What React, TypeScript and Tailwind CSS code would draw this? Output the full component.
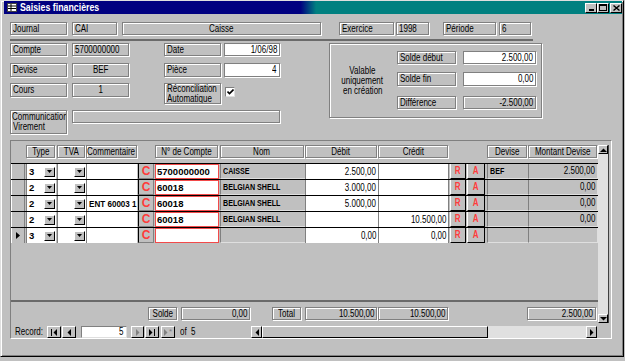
import React from "react";

const ET = "border border-[#808080] shadow-[1px_1px_0_#fff,inset_1px_1px_0_#fff]";
const RAISED = "bg-[#c0c0c0] border border-t-white border-l-white border-r-black border-b-black";

type Al = "left" | "center" | "right";

function S({ children, o = "left", k = "n" }: { children?: React.ReactNode; o?: Al; k?: "n" | "b" | "c" }) {
  const origin = o === "center" ? "origin-center" : o === "right" ? "origin-right" : "origin-left";
  const sc = k === "b" ? "scale-x-[0.75]" : k === "c" ? "scale-x-[0.85]" : "scale-x-[0.8]";
  return <span className={`inline-block whitespace-pre ${sc} ${origin}`}>{children}</span>;
}

function LBox({
  className = "",
  children,
  white = false,
  align = "left",
}: {
  className?: string;
  children?: React.ReactNode;
  white?: boolean;
  align?: Al;
}) {
  const al = align === "center" ? "justify-center" : align === "right" ? "justify-end" : "justify-start";
  return (
    <div
      className={`${ET} ${white ? "bg-white" : "bg-[#c0c0c0]"} flex items-center px-[2px] overflow-hidden whitespace-nowrap ${al} ${className}`}
    >
      {children !== undefined && <S o={align}>{children}</S>}
    </div>
  );
}

function TitleBtn({ className = "", children }: { className?: string; children: React.ReactNode }) {
  return (
    <div className={`w-[12px] h-[10px] ${RAISED} flex items-center justify-center ${className}`}>{children}</div>
  );
}

function Combo({ v }: { v: string }) {
  return (
    <div className="h-full flex items-center justify-between pl-[2px] pr-[1px]">
      <span className="font-bold text-[9.5px]">{v}</span>
      <div className={`w-[11px] h-[10px] ${RAISED} flex items-center justify-center`}>
        <svg width="5" height="3" viewBox="0 0 5 3">
          <path d="M0 0H5L2.5 3Z" fill="#000" />
        </svg>
      </div>
    </div>
  );
}

type RowT = {
  type: string;
  comment: string;
  compte: string;
  nom: string;
  debit: string;
  credit: string;
  devise: string;
  montant: string;
  cur?: boolean;
};

const rows: RowT[] = [
  { type: "3", comment: "", compte: "5700000000", nom: "CAISSE", debit: "2.500,00", credit: "", devise: "BEF", montant: "2.500,00" },
  { type: "2", comment: "", compte: "60018", nom: "BELGIAN SHELL", debit: "3.000,00", credit: "", devise: "", montant: "0,00" },
  { type: "2", comment: "ENT 60003 1", compte: "60018", nom: "BELGIAN SHELL", debit: "5.000,00", credit: "", devise: "", montant: "0,00" },
  { type: "2", comment: "", compte: "60018", nom: "BELGIAN SHELL", debit: "", credit: "10.500,00", devise: "", montant: "0,00" },
  { type: "3", comment: "", compte: "", nom: "", debit: "0,00", credit: "0,00", devise: "", montant: "", cur: true },
];

const CELL = "h-[15px] border-l border-l-[#808080] overflow-hidden whitespace-nowrap";
const BOLD = "font-bold text-[9.5px]";

function RedBtn({ className = "", ch }: { className?: string; ch: string }) {
  return (
    <div
      className={`h-[15px] bg-[#c0c0c0] border-r border-b border-r-black border-b-black border-l border-l-white flex items-center justify-center text-[#ff3b3b] font-bold text-[10px] ${className}`}
    >
      <S o="center">{ch}</S>
    </div>
  );
}

function DataRow({ r }: { r: RowT }) {
  return (
    <div className="flex h-[16px] border-t border-t-black">
      <div className="w-[14px] h-[15px] bg-[#c0c0c0] border-l border-l-white border-r border-r-[#808080] flex items-center justify-center">
        {r.cur && (
          <svg width="4" height="7" viewBox="0 0 4 7">
            <path d="M0 0L4 3.5L0 7Z" fill="#000" />
          </svg>
        )}
      </div>
      <div className={`ml-[1px] w-[30px] bg-white ${CELL}`}>
        <Combo v={r.type} />
      </div>
      <div className={`ml-[1px] w-[29px] bg-white ${CELL}`}>
        <Combo v="" />
      </div>
      <div className={`w-[51px] bg-white ${CELL} ${BOLD} flex items-center pl-[2px]`}>
        <S k="c">{r.comment}</S>
      </div>
      <div className="ml-[1px] w-[16px] h-[15px] bg-[#c0c0c0] border-l border-l-black border-r border-r-[#808080] border-b border-b-[#808080] flex items-center justify-center text-[#ff3b3b] font-bold text-[12px]">
        C
      </div>
      <div className={`ml-[1px] w-[64px] h-[15px] bg-white border border-[#f24a4a] flex items-center pl-[1px] ${BOLD} overflow-hidden whitespace-nowrap`}>
        {r.compte}
      </div>
      <div className={`ml-[1px] w-[85px] bg-[#c0c0c0] ${CELL} ${BOLD} flex items-center pl-[2px] border-b border-b-[#dfdfdf]`}>
        <S k="b">{r.nom}</S>
      </div>
      <div className={`w-[73px] bg-white ${CELL} flex items-center justify-end pr-[2px]`}>
        <S o="right">{r.debit}</S>
      </div>
      <div className={`w-[71px] bg-white ${CELL} flex items-center justify-end pr-[2px] border-r border-r-[#808080]`}>
        <S o="right">{r.credit}</S>
      </div>
      <RedBtn className="ml-[1px] w-[16px]" ch="R" />
      <RedBtn className="ml-[1px] w-[18px]" ch="A" />
      <div className={`ml-[2px] w-[41px] bg-[#c0c0c0] ${CELL} ${BOLD} flex items-center pl-[2px] border-b border-b-[#dfdfdf]`}>
        <S k="b">{r.devise}</S>
      </div>
      <div className={`w-[70px] bg-[#c0c0c0] ${CELL} flex items-center justify-end pr-[2px] border-b border-b-[#dfdfdf] border-r border-r-[#dfdfdf]`}>
        <S o="right">{r.montant}</S>
      </div>
    </div>
  );
}

function Tri({ dir, color = "#000" }: { dir: "l" | "r" | "u" | "d"; color?: string }) {
  const d =
    dir === "l" ? "M4 0V7L0.5 3.5Z" : dir === "r" ? "M0 0V7L3.5 3.5Z" : dir === "u" ? "M0 4H7L3.5 0.5Z" : "M0 0H7L3.5 3.5Z";
  const w = dir === "l" || dir === "r" ? 4 : 7;
  const h = dir === "l" || dir === "r" ? 7 : 4;
  return (
    <svg width={w} height={h} viewBox={`0 0 ${w} ${h}`}>
      <path d={d} fill={color} />
    </svg>
  );
}

export default function App() {
  return (
    <div className="w-[625px] h-[361px] bg-[#c0c0c0] overflow-hidden font-['Liberation_Sans',Arial,sans-serif] text-[10px] leading-none text-black">
      <div className="w-[624px] h-[357px] border-t border-l border-t-[#dfdfdf] border-l-[#dfdfdf] border-r border-b border-r-black border-b-black shadow-[inset_1px_1px_0_#fff,inset_-1px_-1px_0_#808080] pl-[3px] pr-[1px]">
        {/* Title bar */}
        <div className="h-[13px] flex items-center bg-[linear-gradient(to_right,#000080_0%,#000080_48%,#008080_50.5%,#008080_100%)]">
          <div className="ml-[3px] w-[10px] h-[9px]">
            <svg width="10" height="9" viewBox="0 0 10 9">
              <rect x="0" y="0" width="10" height="9" fill="#c0c0c0" />
              <rect x="1" y="1" width="8" height="7" fill="#fff" />
              <path d="M1 3H9M1 5.5H9M4 1V8" stroke="#000" strokeWidth="1" />
              <rect x="0.5" y="0.5" width="9" height="8" fill="none" stroke="#404040" strokeWidth="1" />
            </svg>
          </div>
          <span className="ml-[3px] text-white font-bold text-[11px]">
            <S>Saisies financières</S>
          </span>
          <div className="ml-auto flex items-center">
            <TitleBtn>
              <div className="mt-[5px] w-[5px] h-[2px] bg-black" />
            </TitleBtn>
            <TitleBtn>
              <div className="w-[8px] h-[7px] border border-black border-t-2" />
            </TitleBtn>
            <TitleBtn className="ml-[1px]">
              <svg width="7" height="6" viewBox="0 0 7 6">
                <path d="M0.5 0.5L6.5 5.5M6.5 0.5L0.5 5.5" stroke="#000" strokeWidth="1.4" />
              </svg>
            </TitleBtn>
          </div>
        </div>

        {/* Body */}
        <div className="pl-[6px] pt-[8px]">
          <div className="flex h-[13px]">
            <LBox className="w-[57px] h-[13px]">Journal</LBox>
            <LBox className="ml-[5px] w-[45px] h-[13px]">CAI</LBox>
            <LBox className="ml-[5px] w-[199px] h-[13px]" align="center">
              Caisse
            </LBox>
            <LBox className="ml-[18px] w-[55px] h-[13px]">Exercice</LBox>
            <LBox className="ml-[2px] w-[33px] h-[13px]">1998</LBox>
            <LBox className="ml-[14px] w-[53px] h-[13px]">Période</LBox>
            <LBox className="ml-[3px] w-[32px] h-[13px]">6</LBox>
          </div>
          <div className="mt-[4px] w-[523px] h-[2px] bg-[#6a6a6a]" />

          <div className="mt-[2px] flex items-start">
            <div className="w-[270px]">
              <div className="flex h-[13px]">
                <LBox className="w-[57px] h-[13px]">Compte</LBox>
                <LBox className="ml-[5px] w-[57px] h-[13px]">5700000000</LBox>
                <LBox className="ml-[35px] w-[57px] h-[13px]">Date</LBox>
                <LBox className="ml-[3px] w-[56px] h-[13px]" white align="right">
                  1/06/98
                </LBox>
              </div>
              <div className="mt-[7px] flex h-[14px]">
                <LBox className="w-[57px] h-[14px]">Devise</LBox>
                <LBox className="ml-[5px] w-[57px] h-[14px]" align="center">
                  BEF
                </LBox>
                <LBox className="ml-[35px] w-[57px] h-[14px]">Pièce</LBox>
                <LBox className="ml-[3px] w-[56px] h-[14px]" white align="right">
                  4
                </LBox>
              </div>
              <div className="mt-[6px] flex items-start h-[21px]">
                <LBox className="w-[57px] h-[14px]">Cours</LBox>
                <LBox className="ml-[5px] w-[57px] h-[14px]" align="center">
                  1
                </LBox>
                <div className={`ml-[35px] w-[57px] h-[21px] ${ET} px-[2px] flex flex-col justify-center leading-[10px] overflow-hidden`}>
                  <S>Réconciliation</S>
                  <S>Automatique</S>
                </div>
                <div className="ml-[4px] mt-[4px] w-[10px] h-[10px] bg-white border border-t-[#808080] border-l-[#808080] border-r-[#dfdfdf] border-b-[#dfdfdf] flex items-center justify-center">
                  <svg width="7" height="6" viewBox="0 0 7 6">
                    <path d="M0.5 2.5L2.5 4.5L6.5 0.5" stroke="#000" strokeWidth="1.6" fill="none" />
                  </svg>
                </div>
              </div>
              <div className="mt-[6px] flex items-start">
                <div className={`w-[57px] h-[24px] ${ET} px-[1px] flex flex-col justify-center leading-[10px] overflow-hidden`}>
                  <S>Communication</S>
                  <span className="pl-[1px]">
                    <S>Virement</S>
                  </span>
                </div>
                <LBox className="ml-[5px] w-[208px] h-[13px]" />
              </div>
            </div>

            <div className={`ml-[49px] w-[213px] h-[75px] ${ET} flex`}>
              <div className="w-[65px] flex flex-col items-center justify-center text-center leading-[10px] pt-[1px]">
                <S o="center">Valable</S>
                <S o="center">uniquement</S>
                <S o="center">en création</S>
              </div>
              <div className="pt-[7px] pl-[2px]">
                <div className="flex h-[13px]">
                  <LBox className="w-[59px] h-[13px]">Solde début</LBox>
                  <LBox className="ml-[7px] w-[73px] h-[13px]" white align="right">
                    2.500,00
                  </LBox>
                </div>
                <div className="mt-[8px] flex h-[14px]">
                  <LBox className="w-[59px] h-[14px]">Solde fin</LBox>
                  <LBox className="ml-[7px] w-[73px] h-[14px]" white align="right">
                    0,00
                  </LBox>
                </div>
                <div className="mt-[10px] flex h-[13px]">
                  <LBox className="w-[59px] h-[13px]">Différence</LBox>
                  <LBox className="ml-[7px] w-[73px] h-[13px]" align="right">
                    -2.500,00
                  </LBox>
                </div>
              </div>
            </div>
          </div>

          {/* Subform */}
          <div className="mt-[6px] w-[602px] h-[199px] border border-t-[#808080] border-l-[#808080] border-r-white border-b-white flex flex-col">
            <div className="flex h-[183px]">
              <div className="w-[587px] flex flex-col">
                <div className="mt-[4px] flex h-[13px]">
                  <div className="w-[14px]" />
                  <LBox className="ml-[1px] w-[29px] h-[13px]" align="center">
                    Type
                  </LBox>
                  <LBox className="ml-[2px] w-[28px] h-[13px]" align="center">
                    TVA
                  </LBox>
                  <LBox className="ml-[1px] w-[51px] h-[13px]" align="center">
                    Commentaire
                  </LBox>
                  <LBox className="ml-[18px] w-[63px] h-[13px]" align="center">
                    N° de Compte
                  </LBox>
                  <LBox className="ml-[2px] w-[84px] h-[13px]" align="center">
                    Nom
                  </LBox>
                  <LBox className="ml-[1px] w-[72px] h-[13px]" align="center">
                    Débit
                  </LBox>
                  <LBox className="ml-[1px] w-[70px] h-[13px]" align="center">
                    Crédit
                  </LBox>
                  <LBox className="ml-[39px] w-[40px] h-[13px]" align="center">
                    Devise
                  </LBox>
                  <LBox className="ml-[1px] w-[69px] h-[13px]" align="center">
                    Montant Devise
                  </LBox>
                </div>
                <div className="mt-[5px]">
                  {rows.map((r, i) => (
                    <DataRow key={i} r={r} />
                  ))}
                </div>
                <div className="h-[57px]" />
                <div className="h-[2px] bg-[#6a6a6a]" />
                <div className="mt-[5px] flex h-[13px]">
                  <LBox className="ml-[137px] w-[29px] h-[13px]" align="center">
                    Solde
                  </LBox>
                  <LBox className="ml-[4px] w-[69px] h-[13px]" align="right">
                    0,00
                  </LBox>
                  <LBox className="ml-[22px] w-[29px] h-[13px]" align="center">
                    Total
                  </LBox>
                  <LBox className="ml-[4px] w-[72px] h-[13px]" align="right">
                    10.500,00
                  </LBox>
                  <LBox className="ml-[1px] w-[70px] h-[13px]" align="right">
                    10.500,00
                  </LBox>
                  <LBox className="ml-[79px] w-[69px] h-[13px]" align="right">
                    2.500,00
                  </LBox>
                </div>
              </div>
              {/* vertical scrollbar */}
              <div className="mt-[4px] w-[11px] h-[178px] flex flex-col border-r border-r-[#404040]">
                <div className={`h-[9px] ${RAISED} flex items-center justify-center`}>
                  <Tri dir="u" />
                </div>
                <div className="flex-1 bg-[#e0e0e0]" />
                <div className={`h-[9px] ${RAISED} flex items-center justify-center`}>
                  <Tri dir="d" />
                </div>
              </div>
            </div>

            {/* nav bar */}
            <div className="mt-[2px] flex h-[12px] items-center">
              <div className="w-[240px] h-[12px] flex items-center">
                <span className="ml-[4px] w-[32px]">
                  <S>Record:</S>
                </span>
                <div className={`w-[14px] h-[12px] ${RAISED} flex items-center justify-center gap-[1px]`}>
                  <div className="w-[1px] h-[7px] bg-black" />
                  <Tri dir="l" />
                </div>
                <div className={`ml-[1px] w-[14px] h-[12px] ${RAISED} flex items-center justify-center`}>
                  <Tri dir="l" />
                </div>
                <div className="ml-[5px] w-[46px] h-[12px] bg-white border border-t-[#808080] border-l-[#808080] border-r-[#dfdfdf] border-b-[#dfdfdf] flex items-center justify-end pr-[2px]">
                  <S o="right">5</S>
                </div>
                <div className={`ml-[4px] w-[13px] h-[12px] ${RAISED} flex items-center justify-center`}>
                  <Tri dir="r" color="#808080" />
                </div>
                <div className={`ml-[1px] w-[14px] h-[12px] ${RAISED} flex items-center justify-center gap-[1px]`}>
                  <Tri dir="r" />
                  <div className="w-[1px] h-[7px] bg-black" />
                </div>
                <div className={`ml-[2px] w-[14px] h-[12px] ${RAISED} flex items-center justify-center gap-[1px]`}>
                  <Tri dir="r" color="#808080" />
                  <span className="text-[#808080] text-[8px] leading-none">*</span>
                </div>
                <span className="ml-[5px]">
                  <S>{"of  5"}</S>
                </span>
              </div>
              <div className="w-[346px] h-[12px] flex">
                <div className={`w-[11px] h-[12px] ${RAISED} flex items-center justify-center`}>
                  <Tri dir="l" />
                </div>
                <div className={`w-[226px] h-[12px] ${RAISED}`} />
                <div className="flex-1 h-[12px] bg-[#e0e0e0]" />
                <div className={`w-[11px] h-[12px] ${RAISED} flex items-center justify-center`}>
                  <Tri dir="r" />
                </div>
              </div>
              <div className="w-[13px] h-[12px] bg-[#c0c0c0]" />
            </div>
          </div>
        </div>
      </div>
    </div>
  );
}
